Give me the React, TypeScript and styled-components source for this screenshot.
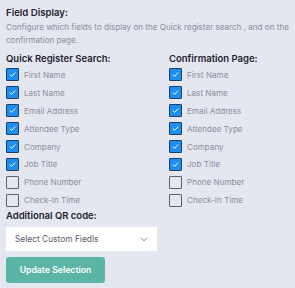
import React from "react";
import styled, { createGlobalStyle } from "styled-components";

const Global = createGlobalStyle`
  html, body { margin: 0; padding: 0; background: #e4e6f0; }
  body { font-family: Inter, "Noto Sans", sans-serif; }
`;

const Page = styled.div`
  width: 295px;
  height: 288px;
  box-sizing: border-box;
  padding: 6px 6px 0 6px;
  background: #e4e6f0;
`;

const Title = styled.div`
  font-size: 9.6px;
  font-weight: 600;
  color: #23232d;
  line-height: 14px;
`;

const Desc = styled.p`
  margin: 0.5px 0 0 0;
  font-size: 8.1px;
  color: #8d8e9c;
  line-height: 13px;
`;

const Columns = styled.div`
  display: grid;
  grid-template-columns: 163px 1fr;
  margin-top: 5.5px;
`;

const Column = styled.div`
  display: flex;
  flex-direction: column;
`;

const Heading = styled.div`
  font-size: 9.5px;
  font-weight: 600;
  color: #23232d;
  line-height: 14px;
  margin-bottom: 0;
`;

const Row = styled.label`
  display: flex;
  align-items: center;
  gap: 5px;
  height: 17.9px;
`;

const Box = styled.span<{ $checked: boolean }>`
  width: 11px;
  height: 11px;
  box-sizing: content-box;
  border: 1px solid ${(p) => (p.$checked ? "#1f3d66" : "#5c5f6e")};
  background: ${(p) => (p.$checked ? "#1c8ff0" : "transparent")};
  border-radius: 1px;
  display: flex;
  align-items: center;
  justify-content: center;
`;

const Label = styled.span`
  font-size: 8.1px;
  color: #8d8e9c;
`;

const SubHeading = styled(Heading)`
  margin-top: 0;
  margin-bottom: 4px;
`;

const Select = styled.div`
  width: 151px;
  height: 24px;
  box-sizing: border-box;
  background: #ffffff;
  display: flex;
  align-items: center;
  justify-content: space-between;
  padding: 0 9px;
  font-size: 8.4px;
  color: #5a5b6a;
`;

const Button = styled.button`
  display: block;
  margin-top: 6px;
  width: 99px;
  height: 26px;
  border: none;
  border-radius: 3px;
  background: #5bb5a6;
  color: #ffffff;
  font-family: Inter, "Noto Sans", sans-serif;
  font-size: 8.7px;
  font-weight: 600;
  padding: 0;
`;

const fields = [
  "First Name",
  "Last Name",
  "Email Address",
  "Attendee Type",
  "Company",
  "Job Title",
  "Phone Number",
  "Check-In Time",
];

const Check = () => (
  <svg width="9" height="9" viewBox="0 0 9 9">
    <path d="M1.8 4.6 L3.6 6.3 L7.2 2.6" fill="none" stroke="#ffffff" strokeWidth="1" />
  </svg>
);

const FieldList = ({ title }: { title: string }) => (
  <Column>
    <Heading>{title}</Heading>
    {fields.map((f, i) => (
      <Row key={f}>
        <Box $checked={i < 6}>{i < 6 && <Check />}</Box>
        <Label>{f}</Label>
      </Row>
    ))}
  </Column>
);

export default function App() {
  return (
    <Page>
      <Global />
      <Title>Field Display:</Title>
      <Desc>
        Configure which fields to display on the Quick register search , and on the confirmation page.
      </Desc>
      <Columns>
        <FieldList title="Quick Register Search:" />
        <FieldList title="Confirmation Page:" />
      </Columns>
      <SubHeading>Additional QR code:</SubHeading>
      <Select>
        <span>Select Custom Fiedls</span>
        <svg width="8" height="5" viewBox="0 0 8 5">
          <path d="M0.8 0.8 L4 3.8 L7.2 0.8" fill="none" stroke="#8d8e9c" strokeWidth="1" />
        </svg>
      </Select>
      <Button>Update Selection</Button>
    </Page>
  );
}
